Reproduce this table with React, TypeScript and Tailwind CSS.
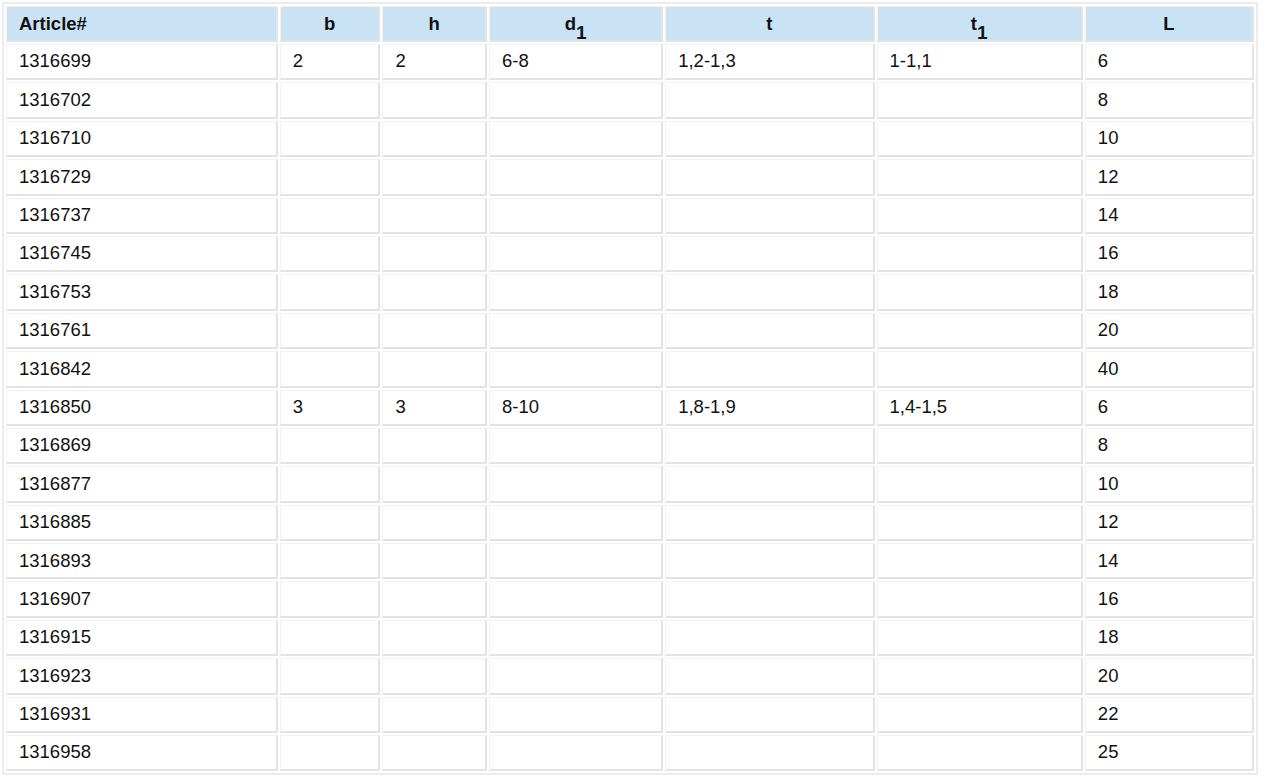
const rows: [string, string, string, string, string, string, string][] = [
  ["1316699", "2", "2", "6-8", "1,2-1,3", "1-1,1", "6"],
  ["1316702", "", "", "", "", "", "8"],
  ["1316710", "", "", "", "", "", "10"],
  ["1316729", "", "", "", "", "", "12"],
  ["1316737", "", "", "", "", "", "14"],
  ["1316745", "", "", "", "", "", "16"],
  ["1316753", "", "", "", "", "", "18"],
  ["1316761", "", "", "", "", "", "20"],
  ["1316842", "", "", "", "", "", "40"],
  ["1316850", "3", "3", "8-10", "1,8-1,9", "1,4-1,5", "6"],
  ["1316869", "", "", "", "", "", "8"],
  ["1316877", "", "", "", "", "", "10"],
  ["1316885", "", "", "", "", "", "12"],
  ["1316893", "", "", "", "", "", "14"],
  ["1316907", "", "", "", "", "", "16"],
  ["1316915", "", "", "", "", "", "18"],
  ["1316923", "", "", "", "", "", "20"],
  ["1316931", "", "", "", "", "", "22"],
  ["1316958", "", "", "", "", "", "25"],
];

const widths = ["w-[270px]", "w-[100px]", "w-[104px]", "w-[173px]", "w-[208px]", "w-[205px]", "w-[168px]"];

export default function App() {
  const cell =
    "border-t border-l border-t-[#f2f2f2] border-l-[#f2f2f2] border-b-2 border-r-2 border-b-[#e3e3e3] border-r-[#e3e3e3]";
  const head = `${cell} bg-[#c9e3f5] font-bold`;
  return (
    <div className="bg-white min-h-[776px] pt-[2px] pl-[2px] font-['Liberation_Sans',Arial,sans-serif] text-[18.5px] text-[#111]">
      <table className="border-separate border-spacing-[2px] w-[1256px] table-fixed border-2 border-[#ececec]">
        <thead>
          <tr>
            <th className={`${head} ${widths[0]} h-[36px] text-left pl-[12px]`}>Article#</th>
            <th className={`${head} ${widths[1]}`}>b</th>
            <th className={`${head} ${widths[2]}`}>h</th>
            <th className={`${head} ${widths[3]}`}>
              d<sub className="text-[19px] align-[-5px]">1</sub>
            </th>
            <th className={`${head} ${widths[4]}`}>t</th>
            <th className={`${head} ${widths[5]}`}>
              t<sub className="text-[19px] align-[-5px]">1</sub>
            </th>
            <th className={`${head} ${widths[6]}`}>L</th>
          </tr>
        </thead>
        <tbody>
          {rows.map((r) => (
            <tr key={r[0]}>
              {r.map((v, i) => (
                <td key={i} className={`${cell} h-[36.4px] pl-[12px] leading-none`}>
                  {v}
                </td>
              ))}
            </tr>
          ))}
        </tbody>
      </table>
    </div>
  );
}
